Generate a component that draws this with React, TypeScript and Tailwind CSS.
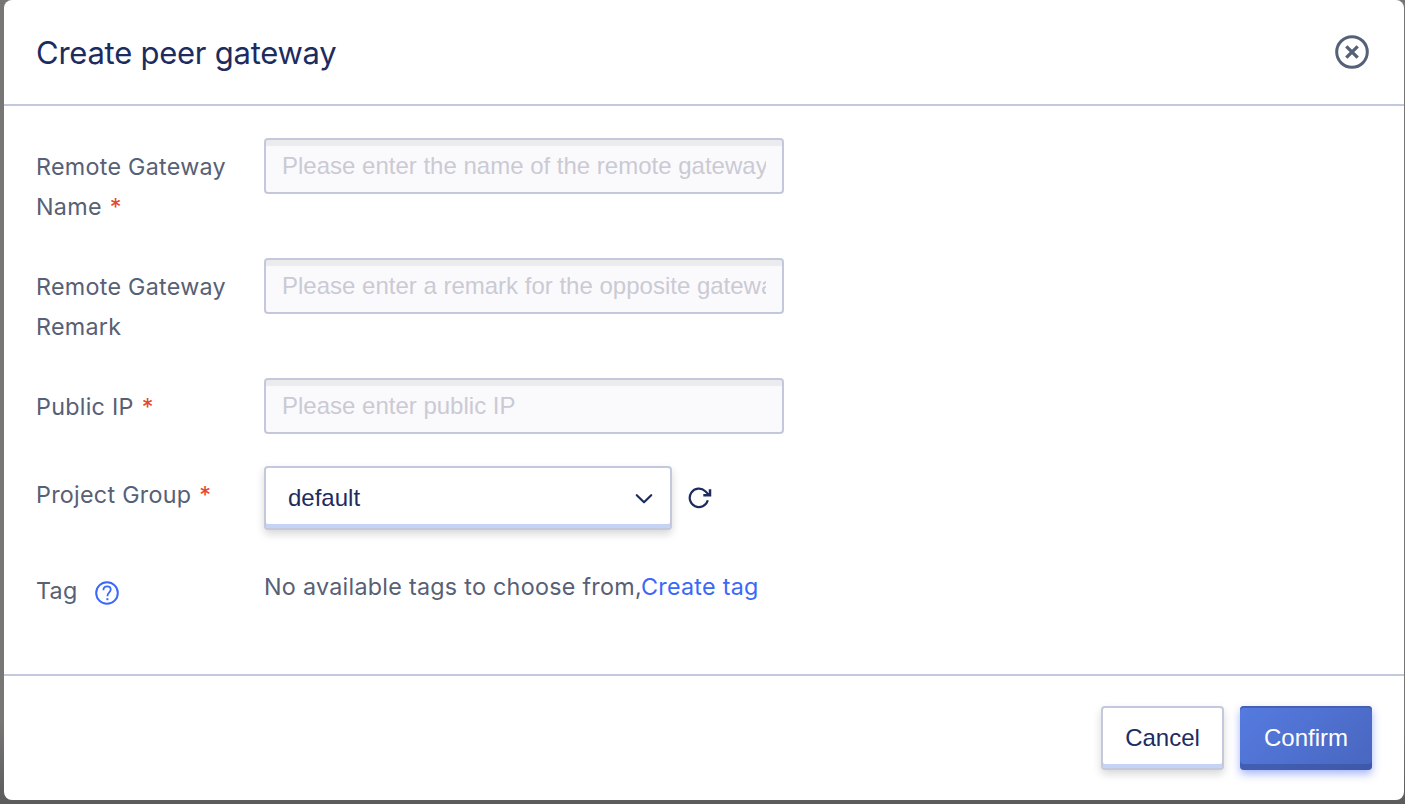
import React from "react";

const LABEL = "text-[23.300px] leading-[40px] tracking-[0.28px] text-[#576075]";

function Row({ label, required, className, children }: { label: string; required?: boolean; className: string; children: React.ReactNode }) {
  return (
    <div className={`flex items-start ${className}`}>
      <label className={`w-[228px] shrink-0 pr-6 pt-[9px] ${LABEL}`}>
        {label}
        {required && <span className="ml-2 text-[#e54630]">*</span>}
      </label>
      {children}
    </div>
  );
}

function TextInput({ placeholder }: { placeholder: string }) {
  return (
    <input
      type="text"
      placeholder={placeholder}
      className="h-14 w-[520px] rounded-[4px] border-2 border-[#c3c8dc] bg-[#fafafc] px-4 font-['Liberation_Sans',Arial,sans-serif] text-[24px] text-[#1d2c5f] shadow-[inset_0_6px_0_#ececef] outline-none placeholder:text-[#cbcad4] placeholder:opacity-100"
    />
  );
}

export default function App() {
  return (
    <div className="flex h-[804px] w-[1405px] overflow-hidden bg-gradient-to-b from-[#787674] from-90% to-[#5c5b5c] pb-1 pl-1 pr-px font-['Inter',sans-serif]">
      <section className="flex w-[1400px] flex-col rounded-[8px] bg-white">
        <header className="flex h-[106px] items-center justify-between border-b-2 border-[#c3c8dc] pl-8 pr-[35px]">
          <h2 className="pt-0.5 text-[31px] leading-[40px] tracking-[-0.25px] text-[#1d2c5f]">Create peer gateway</h2>
          <button type="button" aria-label="Close">
            <svg width="34" height="34" viewBox="0 0 34 34" fill="none" stroke="#556176" className="block">
              <circle cx="17" cy="17" r="15.3" strokeWidth="3" />
              <path d="M11.300 11.300L22.700 22.700M22.700 11.300L11.300 22.700" strokeWidth="3.300" />
            </svg>
          </button>
        </header>

        <main className="flex-1 pl-8 pt-8">
          <Row label="Remote Gateway Name" required className="h-[120px]">
            <TextInput placeholder="Please enter the name of the remote gateway" />
          </Row>
          <Row label="Remote Gateway Remark" className="h-[120px]">
            <TextInput placeholder="Please enter a remark for the opposite gateway" />
          </Row>
          <Row label="Public IP" required className="h-[88px]">
            <TextInput placeholder="Please enter public IP" />
          </Row>
          <Row label="Project Group" required className="h-[96px]">
            <div className="flex items-center gap-4">
              <button
                type="button"
                className="flex h-16 w-[408px] items-center justify-between rounded-[4px] border-2 border-[#c3c8dc] bg-white pl-[22px] pr-4 font-['Liberation_Sans',Arial,sans-serif] text-[24px] text-[#1d2c5f] shadow-[inset_0_-4px_0_#c5d3f5,0_4px_8px_rgba(0,0,0,0.16)]"
              >
                <span>default</span>
                <svg width="20" height="14" viewBox="0 0 20 14" fill="none" stroke="#1d2c5f" strokeWidth="2.2" strokeLinecap="round" strokeLinejoin="round">
                  <path d="M2.800 4.200L10 11.200L17.200 4.200" />
                </svg>
              </button>
              <svg width="24" height="24" viewBox="0 0 24 24" fill="none" stroke="#1d2c5f" strokeWidth="2.2">
                <path d="M19.800 14.300A9.200 9.200 0 1 1 17.300 5.200L21.200 9" />
                <path d="M22 3.300V9.300H15.300" strokeWidth="2.500" />
              </svg>
            </div>
          </Row>
          <div className={`flex items-start ${LABEL}`}>
            <div className="flex w-[228px] items-center pt-[9px]">
              <span>Tag</span>
              <svg width="24" height="24" viewBox="0 0 24 24" fill="none" stroke="#3a68f9" strokeWidth="2" className="ml-[17px] mt-1">
                <circle cx="12" cy="12" r="10.800" />
                <path d="M8.400 9.300C8.400 6.800 10 5.400 12.200 5.400C14.300 5.400 15.700 6.700 15.700 8.600C15.700 11.300 12.400 11.400 12.400 15.200" strokeWidth="1.800" />
                <path d="M12.400 17.200V19.200" />
              </svg>
            </div>
            <p className="pt-[5px]">
              No available tags to choose from,<a className="text-[#3a68f9]">Create tag</a>
            </p>
          </div>
        </main>

        <footer className="flex h-[126px] items-start justify-end gap-4 border-t-2 border-[#c3c8dc] pr-8 pt-[30px] font-['Liberation_Sans',Arial,sans-serif] text-[24px]">
          <button
            type="button"
            className="h-16 w-[123px] rounded-[4px] border-2 border-[#c3c8dc] bg-white text-[#1d2c5f] shadow-[inset_0_-4px_0_#c5d3f5,0_4px_8px_rgba(0,0,0,0.16)]"
          >
            Cancel
          </button>
          <button
            type="button"
            className="h-16 w-[132px] rounded-[4px] bg-linear-135 from-[#557be0] to-[#4966bf] text-white shadow-[inset_0_2px_0_#4560b0,inset_0_-6px_0_rgba(56,80,155,0.6),0_4px_8px_rgba(60,90,240,0.45)]"
          >
            Confirm
          </button>
        </footer>
      </section>
    </div>
  );
}
